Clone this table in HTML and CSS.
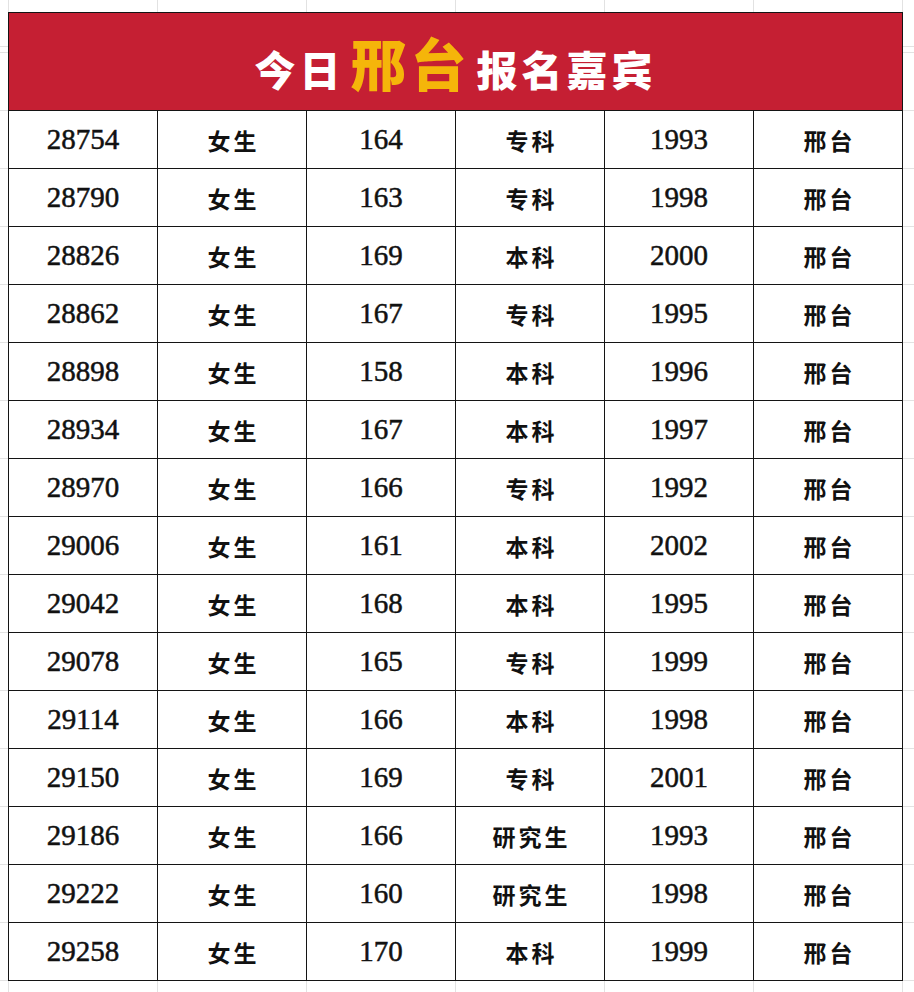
FILE: index.html
```html
<!DOCTYPE html>
<html lang="zh">
<head>
<meta charset="utf-8">
<title>今日邢台报名嘉宾</title>
<link rel="stylesheet" href="styles.css">
</head>
<body>
<table class="sheet">
  <colgroup>
    <col class="c"><col class="c"><col class="c"><col class="c"><col class="c"><col class="c">
  </colgroup>
  <thead>
    <tr class="head-row">
      <th colspan="6" class="title"><span class="w">今日</span><span class="y">邢台</span><span class="w">报名嘉宾</span></th>
    </tr>
  </thead>
  <tbody>
    <tr><td class="n">28754</td><td class="z">女生</td><td class="n">164</td><td class="z">专科</td><td class="n">1993</td><td class="z">邢台</td></tr>
    <tr><td class="n">28790</td><td class="z">女生</td><td class="n">163</td><td class="z">专科</td><td class="n">1998</td><td class="z">邢台</td></tr>
    <tr><td class="n">28826</td><td class="z">女生</td><td class="n">169</td><td class="z">本科</td><td class="n">2000</td><td class="z">邢台</td></tr>
    <tr><td class="n">28862</td><td class="z">女生</td><td class="n">167</td><td class="z">专科</td><td class="n">1995</td><td class="z">邢台</td></tr>
    <tr><td class="n">28898</td><td class="z">女生</td><td class="n">158</td><td class="z">本科</td><td class="n">1996</td><td class="z">邢台</td></tr>
    <tr><td class="n">28934</td><td class="z">女生</td><td class="n">167</td><td class="z">本科</td><td class="n">1997</td><td class="z">邢台</td></tr>
    <tr><td class="n">28970</td><td class="z">女生</td><td class="n">166</td><td class="z">专科</td><td class="n">1992</td><td class="z">邢台</td></tr>
    <tr><td class="n">29006</td><td class="z">女生</td><td class="n">161</td><td class="z">本科</td><td class="n">2002</td><td class="z">邢台</td></tr>
    <tr><td class="n">29042</td><td class="z">女生</td><td class="n">168</td><td class="z">本科</td><td class="n">1995</td><td class="z">邢台</td></tr>
    <tr><td class="n">29078</td><td class="z">女生</td><td class="n">165</td><td class="z">专科</td><td class="n">1999</td><td class="z">邢台</td></tr>
    <tr><td class="n">29114</td><td class="z">女生</td><td class="n">166</td><td class="z">本科</td><td class="n">1998</td><td class="z">邢台</td></tr>
    <tr><td class="n">29150</td><td class="z">女生</td><td class="n">169</td><td class="z">专科</td><td class="n">2001</td><td class="z">邢台</td></tr>
    <tr><td class="n">29186</td><td class="z">女生</td><td class="n">166</td><td class="z">研究生</td><td class="n">1993</td><td class="z">邢台</td></tr>
    <tr><td class="n">29222</td><td class="z">女生</td><td class="n">160</td><td class="z">研究生</td><td class="n">1998</td><td class="z">邢台</td></tr>
    <tr><td class="n">29258</td><td class="z">女生</td><td class="n">170</td><td class="z">本科</td><td class="n">1999</td><td class="z">邢台</td></tr>
  </tbody>
</table>
</body>
</html>
```
FILE: styles.css
```css
html, body {
  margin: 0;
  padding: 0;
}
body {
  width: 914px;
  height: 992px;
  overflow: hidden;
  background-color: #ffffff;
  background-image:
    repeating-linear-gradient(to right, #e2e2e2 0 1px, transparent 1px 149px),
    repeating-linear-gradient(to bottom, #e2e2e2 0 1px, transparent 1px 58px);
  background-position: 8px 0, 0 52px;
}
.sheet {
  border-collapse: collapse;
  table-layout: fixed;
  width: 895px;
  margin: 12px 0 0 8px;
  background: #ffffff;
  color: #111111;
}
.sheet .c {
  width: 149px;
}
.sheet td, .sheet th {
  border: 1px solid #141414;
  padding: 0;
  text-align: center;
  vertical-align: middle;
}
.head-row {
  height: 98px;
}
.title {
  background: #c51f33;
  font-family: "Noto Sans CJK SC", sans-serif;
  font-weight: 900;
  line-height: 1;
  padding-top: 6px;
  white-space: nowrap;
}
.title .w {
  color: #ffffff;
  font-size: 41px;
  letter-spacing: 4px;
}
.title .y {
  color: #f5b50a;
  font-size: 56px;
  letter-spacing: 4px;
  margin-left: 6px;
  margin-right: 6px;
}
tbody tr {
  height: 58px;
}
.n {
  font-family: "Liberation Serif", "Times New Roman", serif;
  font-size: 29px;
  line-height: 1;
  -webkit-text-stroke: 0.5px #111111;
  padding-top: 10px;
}
.z {
  font-family: "Noto Sans CJK SC", sans-serif;
  font-weight: 700;
  font-size: 23px;
  letter-spacing: 3px;
  text-indent: 3px;
  padding-top: 3px;
}
```
